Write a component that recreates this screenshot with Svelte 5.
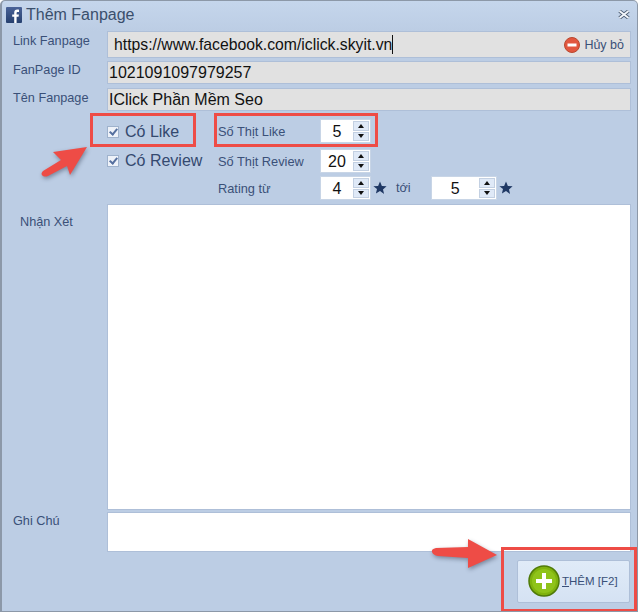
<script>
  const spinners = [
    { label: "Số Thịt Like", value: 5 },
    { label: "Số Thịt Review", value: 20 }
  ];
</script>

{#snippet spin(value, wide = false)}
  <div class="spin" class:wide>
    <span class="spin-value">{value}</span>
    <div class="spin-btns">
      <span class="spin-btn"><i class="up"></i></span>
      <span class="spin-btn"><i class="down"></i></span>
    </div>
  </div>
{/snippet}

{#snippet star()}
  <svg class="star" viewBox="0 0 14 14" width="14" height="14"><path d="M7 .5l1.900 4.400 4.700.4-3.600 3.100 1.100 4.700L7 10.100l-4.100 2.500L4 7.900.4 5.300l4.700-.4z" fill="#1f3864"/></svg>
{/snippet}

<div class="window">
  <header class="titlebar">
    <svg class="fb" viewBox="0 0 16 16" width="16" height="16">
      <defs>
        <linearGradient id="fbg" x1="0" y1="0" x2="0" y2="1">
          <stop offset="0" stop-color="#4a6398"/>
          <stop offset="1" stop-color="#26406f"/>
        </linearGradient>
      </defs>
      <rect width="16" height="16" rx="1" fill="url(#fbg)"/>
      <path d="M10.600 16V9.800h2l.3-2.400h-2.300V6c0-.7.2-1.100 1.200-1.100h1.200V2.700c-.2 0-.9-.1-1.800-.1-1.800 0-3 1.100-3 3.100v1.700H6.200v2.400h2V16z" fill="#fff"/>
    </svg>
    <span class="title">Thêm Fanpage</span>
    <svg class="close" viewBox="0 0 12 9" width="12" height="9">
      <path d="M1.500 1l9 7M10.500 1l-9 7" stroke="#4f5f75" stroke-width="3.600"/>
      <path d="M1.500 1l9 7M10.500 1l-9 7" stroke="#f4f7fb" stroke-width="1.800"/>
    </svg>
  </header>

  <div class="form">
    <span class="lbl">Link Fanpage</span>
    <div class="field link">
      <span class="url">https://www.facebook.com/iclick.skyit.vn</span><span class="caret"></span>
      <span class="cancel">
        <svg viewBox="0 0 16 16" width="16" height="16">
          <circle cx="8" cy="8" r="7.500" fill="#e2573f" stroke="#b9482f"/>
          <rect x="3.500" y="6.500" width="9" height="3" fill="#fff"/>
        </svg>
        Hủy bỏ
      </span>
    </div>

    <span class="lbl id">FanPage ID</span>
    <div class="field id">1021091097979257</div>

    <span class="lbl name">Tên Fanpage</span>
    <div class="field name">IClick Phần Mềm Seo</div>

    <div class="options">
      <div class="checks">
        <div class="check"><span class="box"></span>Có Like</div>
        <div class="check"><span class="box"></span>Có Review</div>
      </div>
      <div class="spins">
        {#each spinners as s}
          <div class="spin-row">
            <span class="spin-label">{s.label}</span>
            {@render spin(s.value)}
          </div>
        {/each}
        <div class="spin-row rating">
          <span class="spin-label">Rating từ</span>
          {@render spin(4)}
          {@render star()}
          <span class="to">tới</span>
          {@render spin(5, true)}
          {@render star()}
        </div>
      </div>
    </div>

    <span class="lbl note">Nhận Xét</span>
    <div class="area review"></div>

    <span class="lbl memo-lbl">Ghi Chú</span>
    <div class="area memo"></div>
  </div>

  <footer class="actions">
    <button class="add">
      <svg viewBox="0 0 32 32" width="32" height="32">
        <circle cx="16" cy="16" r="15" fill="#7fb20e" stroke="#4f7a08" stroke-width="1.500"/>
        <circle cx="16" cy="16" r="12" fill="#8fc31a"/>
        <rect x="14" y="8" width="4" height="16" fill="#fff"/>
        <rect x="8" y="14" width="16" height="4" fill="#fff"/>
      </svg>
      <span><u>T</u>HÊM [F2]</span>
    </button>
  </footer>

  <!-- annotations drawn over the window -->
  <div class="mark m1"></div>
  <div class="mark m2"></div>
  <div class="mark m3"></div>
  <svg class="arrow a1" viewBox="0 0 50 34" width="50" height="34">
    <path d="M47 1 L13 6 L21 14 L3 25 Q0 28 3 30 Q5 31 8 30 L27 20 L30 29 Z" fill="#ee4c46"/>
  </svg>
  <svg class="arrow a2" viewBox="0 0 70 36" width="70" height="36">
    <path d="M67 19 L38 3 L38 11 L6 12 Q1 13 2 16 Q3 19 8 20 L38 22 L38 32 Z" fill="#ee4c46"/>
  </svg>
</div>

<style>
  :global(body) {
    margin: 0;
    background: #fff;
  }

  .window {
    position: relative;
    width: 638px;
    height: 612px;
    box-sizing: border-box;
    display: flex;
    flex-direction: column;
    border: 1px solid #8c98a8;
    border-left-width: 2px;
    border-radius: 5px 5px 0 0;
    background: linear-gradient(#c5d6ec 0, #bccde4 30px);
    font-family: "Liberation Sans", Arial, sans-serif;
    color: #2c4470;
    overflow: hidden;
  }

  .titlebar {
    height: 30px;
    flex: none;
    display: flex;
    align-items: center;
    gap: 4px;
    padding: 0 7px 3px 4px;
    box-sizing: border-box;
  }

  .title {
    font-size: 16px;
    color: #3a4f6c;
    flex: 1;
  }

  .form {
    display: grid;
    grid-template-columns: 105px 524px;
    padding-right: 7px;
  }

  .lbl {
    font-size: 12.700px;
    padding: 3px 0 0 11px;
    color: #3a5078;
  }

  .lbl.id { padding-top: 5px; }
  .lbl.name { padding-top: 7px; }
  .lbl.note { padding: 11px 0 0 18px; }
  .lbl.memo-lbl { padding-top: 4px; }

  .field {
    box-sizing: border-box;
    background: #e1e1e1;
    border: 1px solid #aebfd8;
    color: #111;
    font-size: 16px;
    display: flex;
    align-items: center;
    padding-left: 1px;
  }

  .field.link {
    height: 27px;
    padding-left: 6px;
    font-size: 15.750px;
  }

  .field.id {
    height: 23px;
    margin-top: 3px;
  }

  .field.name {
    height: 23px;
    margin-top: 4px;
  }

  .caret {
    width: 1px;
    height: 19px;
    background: #111;
  }

  .cancel {
    margin-left: auto;
    display: flex;
    align-items: center;
    gap: 4px;
    padding-right: 6px;
    font-size: 12.500px;
    color: #3a5078;
  }

  .options {
    grid-column: 1 / 3;
    height: 93px;
    display: flex;
  }

  .checks {
    width: 216px;
    box-sizing: border-box;
    padding: 10px 0 0 105px;
    display: flex;
    flex-direction: column;
    gap: 7px;
  }

  .check {
    display: flex;
    align-items: center;
    gap: 6px;
    font-size: 16px;
    height: 22px;
    color: #34496f;
    white-space: nowrap;
  }

  .box {
    width: 10px;
    height: 10px;
    border: 1px solid #9fb2cc;
    background: #eef2f9;
    position: relative;
  }

  .box::after {
    content: "";
    position: absolute;
    left: 2.500px;
    top: 0;
    width: 3px;
    height: 6px;
    border: solid #56709f;
    border-width: 0 2px 2px 0;
    transform: rotate(40deg);
  }

  .spins {
    padding-top: 8px;
    display: flex;
    flex-direction: column;
    gap: 6px;
  }

  .spin-row {
    display: flex;
    align-items: center;
    height: 24px;
  }

  .spin-row.rating {
    margin-top: -3px;
  }

  .spin-label {
    width: 102px;
    font-size: 12.800px;
    color: #3a5078;
    white-space: nowrap;
  }

  .spin {
    box-sizing: border-box;
    width: 51px;
    height: 24px;
    background: #fff;
    border: 1px solid #c8d5e6;
    display: flex;
    align-items: center;
  }

  .spin.wide {
    width: 66px;
  }

  .spin-value {
    flex: 1;
    text-align: center;
    font-size: 16px;
    color: #111;
    padding-top: 2px;
  }

  .spin-btns {
    width: 16px;
    height: 20px;
    display: flex;
    flex-direction: column;
    gap: 1px;
    margin-right: 1px;
  }

  .spin-btn {
    flex: 1;
    background: #dfe9f7;
    border: 1px solid #c3d0e2;
    display: flex;
    align-items: center;
    justify-content: center;
  }

  .spin-btn i {
    width: 0;
    height: 0;
    border-left: 3px solid transparent;
    border-right: 3px solid transparent;
  }

  .spin-btn .up { border-bottom: 4px solid #111; }
  .spin-btn .down { border-top: 4px solid #111; }

  .star {
    margin-left: 2px;
  }

  .to {
    font-size: 12.700px;
    color: #3a5078;
    margin: 0 20px 0 9px;
  }

  .area {
    background: #fff;
    border: 1px solid #aebfd8;
    box-sizing: border-box;
  }

  .area.review {
    height: 306px;
  }

  .area.memo {
    height: 40px;
    margin-top: 2px;
  }

  .actions {
    display: flex;
    justify-content: flex-end;
    padding: 8px 7px 0 0;
  }

  .add {
    width: 113px;
    height: 43px;
    box-sizing: border-box;
    display: flex;
    align-items: center;
    gap: 2px;
    padding: 0 0 2px 10px;
    border: 1px solid #aebfd8;
    border-radius: 2px;
    background: linear-gradient(#e0ebf8, #d5e2f3);
    font-family: inherit;
    font-size: 11.500px;
    color: #3a5078;
  }

  .mark {
    position: absolute;
    box-sizing: border-box;
    border: 3px solid #ee4c46;
  }

  .m1 { left: 88px; top: 112px; width: 106px; height: 34px; }
  .m2 { left: 212px; top: 112px; width: 164px; height: 34px; }
  .m3 { left: 499px; top: 546px; width: 136px; height: 65px; }

  .arrow {
    position: absolute;
    filter: drop-shadow(1px 2px 2px rgba(40, 50, 70, 0.45));
  }

  .a1 { left: 38px; top: 145px; }
  .a2 { left: 428px; top: 535px; }
</style>
